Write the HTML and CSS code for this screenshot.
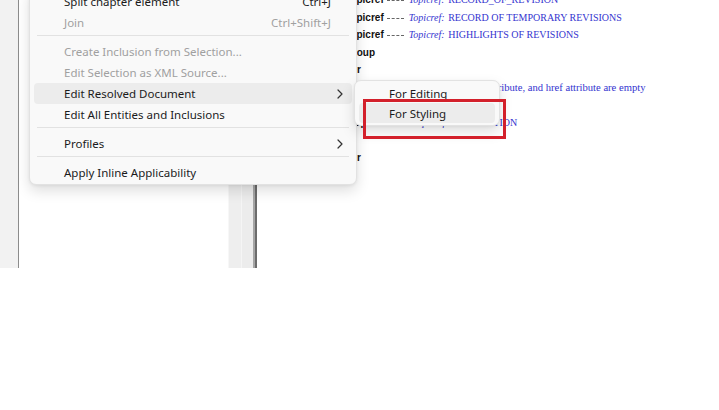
FILE: index.html
```html
<!DOCTYPE html>
<html lang="en">
<head>
    <meta charset="UTF-8">
    <title>Edit Resolved Document</title>
    <link rel="stylesheet" href="styles.css">
</head>
<body>
    <div class="app">
        <div class="side"></div>
        <div class="tree"></div>
        <div class="splitter"></div>

        <div class="doc">
            <div class="doc-lines">
                <div class="line"><b>Topicref</b><span class="dash"></span><i>Topicref:</i> RECORD_OF_REVISION</div>
                <div class="line"><b>Topicref</b><span class="dash"></span><i>Topicref:</i> RECORD OF TEMPORARY REVISIONS</div>
                <div class="line"><b>Topicref</b><span class="dash"></span><i>Topicref:</i> HIGHLIGHTS OF REVISIONS</div>
                <div class="line"><b>Group</b></div>
                <div class="line outdent"><b>Chapter</b></div>
                <div class="line note"><b>Topicref</b><span class="dash"></span><i>Topicref:</i> Navtitle attribute, and href attribute are empty</div>
                <div class="line"><b>Topicref</b><span class="dash"></span><i>Topicref:</i> LEP</div>
                <div class="line shifted"><b>Topicref</b><span class="dash"></span><i>Topicref:</i> DESCRIPTION</div>
                <div class="line"></div>
                <div class="line outdent"><b>Chapter</b></div>
            </div>
        </div>

        <div class="menu">
            <div class="item">
                <span class="label">Split chapter element</span>
                <span class="key">Ctrl+J</span>
                <span class="arrow"></span>
            </div>
            <div class="item disabled">
                <span class="label">Join</span>
                <span class="key">Ctrl+Shift+J</span>
                <span class="arrow"></span>
            </div>
            <div class="sep"></div>
            <div class="item disabled">
                <span class="label">Create Inclusion from Selection...</span>
                <span class="arrow"></span>
            </div>
            <div class="item disabled">
                <span class="label">Edit Selection as XML Source...</span>
                <span class="arrow"></span>
            </div>
            <div class="item active">
                <span class="label">Edit Resolved Document</span>
                <span class="arrow">
                    <svg width="6" height="10" viewBox="0 0 6 10"><path d="M1 1 L5 5 L1 9" fill="none" stroke="#333" stroke-width="1.2" stroke-linecap="round" stroke-linejoin="round"/></svg>
                </span>
            </div>
            <div class="item">
                <span class="label">Edit All Entities and Inclusions</span>
                <span class="arrow"></span>
            </div>
            <div class="sep"></div>
            <div class="item">
                <span class="label">Profiles</span>
                <span class="arrow">
                    <svg width="6" height="10" viewBox="0 0 6 10"><path d="M1 1 L5 5 L1 9" fill="none" stroke="#333" stroke-width="1.2" stroke-linecap="round" stroke-linejoin="round"/></svg>
                </span>
            </div>
            <div class="sep"></div>
            <div class="item">
                <span class="label">Apply Inline Applicability</span>
                <span class="arrow"></span>
            </div>
        </div>

        <div class="submenu">
            <div class="item">
                <span class="label">For Editing</span>
            </div>
            <div class="item active">
                <span class="label">For Styling</span>
            </div>
        </div>

        <div class="callout"></div>
    </div>
</body>
</html>
```

FILE: styles.css
```css
* {
    box-sizing: border-box;
    margin: 0;
    padding: 0;
}

body {
    background: #ffffff;
    font-family: "Noto Sans", "Open Sans", sans-serif;
    width: 719px;
    height: 410px;
    overflow: hidden;
}

.app {
    position: relative;
    display: flex;
    height: 268px;
    overflow: hidden;
}

/* window panes */
.side {
    width: 19px;
    background: #f2f2f2;
    border-right: 1px solid #8c8c8c;
}

.tree {
    width: 209px;
    background: #ffffff;
}

.splitter {
    width: 29px;
    background: linear-gradient(to right,
        #f7f7f7 0, #f7f7f7 1px,
        #eeeeee 1px, #eeeeee 13px,
        #f5f5f5 13px, #f5f5f5 14px,
        #ececec 14px, #ececec 25px,
        #a6a6a6 25px, #a6a6a6 27px,
        #6c6c6c 27px, #6c6c6c 29px);
}

.doc {
    flex: 1;
    padding-left: 88px;
    background: #ffffff;
}

.doc-lines {
    margin-top: -9px;
}

.line {
    height: 17.5px;
    line-height: 17.5px;
    font-family: "Liberation Serif", serif;
    font-size: 10px;
    color: #3434cf;
    white-space: nowrap;
}

.line b {
    font-family: "Liberation Sans", sans-serif;
    font-size: 10px;
    color: #111111;
}

.line i {
    margin-right: 1px;
}

.line.outdent {
    margin-left: -22px;
}

.line.note {
    font-size: 10.6px;
}

.line.shifted {
    padding-left: 4px;
}

.dash {
    display: inline-block;
    width: 17px;
    margin: 0 5px 0 3px;
    border-bottom: 1px dashed #666666;
    vertical-align: middle;
}

/* context menu */
.menu,
.submenu {
    position: absolute;
    background: #f9f9f9;
    border: 1px solid #e2e2e2;
    border-radius: 7px;
    box-shadow: 0 6px 14px rgba(0, 0, 0, 0.13), 0 1px 3px rgba(0, 0, 0, 0.06);
    font-size: 11.5px;
    color: #1b1b1b;
}

.menu {
    left: 29px;
    top: -13px;
    width: 328px;
    padding: 3px 0 1px;
}

.item {
    display: flex;
    align-items: center;
    height: 21px;
    margin: 0 4px;
    padding: 0 4px 0 30px;
    border-radius: 4px;
    white-space: nowrap;
}

.item.active {
    background: #ececec;
}

.item.disabled {
    color: #a0a0a0;
}

.label {
    flex: 1;
}

.key {
    margin-right: 1px;
}

.arrow {
    width: 16px;
    display: flex;
    justify-content: center;
    align-items: center;
}

.sep {
    height: 1px;
    margin: 2px 7px 5px;
    background: #e2e2e2;
}

.submenu {
    left: 354px;
    top: 80px;
    width: 146px;
    padding: 2px 0;
}

.submenu .item {
    height: 20px;
    margin: 0 4px;
    padding-left: 30px;
}

/* red highlight box */
.callout {
    position: absolute;
    left: 363px;
    top: 99px;
    width: 143px;
    height: 40px;
    border: 3px solid #d3202b;
}
```
